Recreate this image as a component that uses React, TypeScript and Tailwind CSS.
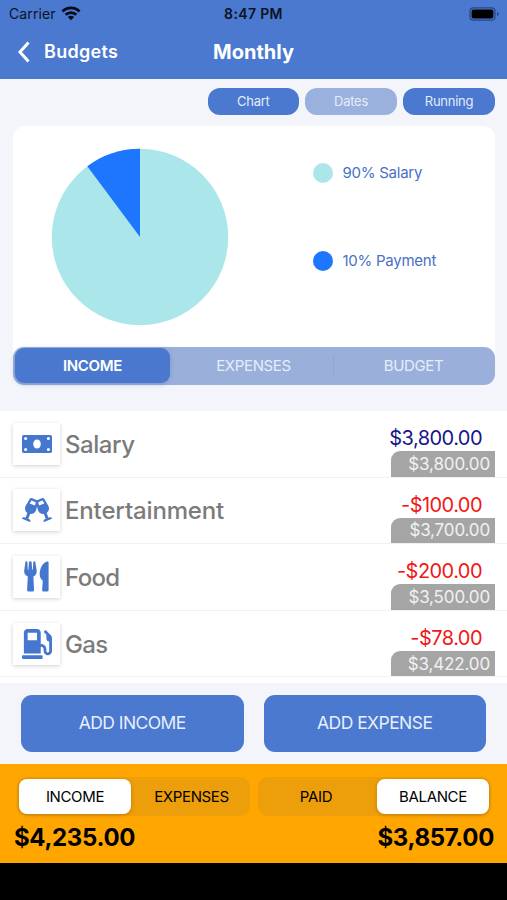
import React from "react";
import { FaGasPump, FaGlassCheers } from "react-icons/fa";

function Banknote() {
  return (
    <svg width="30" height="18" viewBox="0 0 30 18" fill="white">
      <rect width="30" height="18" rx="1.8" fill="#4677cf" />
      <ellipse cx="15" cy="9" rx="3.800" ry="4.500" />
      <circle cx="3.600" cy="3.600" r="1.500" />
      <circle cx="26.400" cy="3.600" r="1.500" />
      <circle cx="3.600" cy="14.400" r="1.500" />
      <circle cx="26.400" cy="14.400" r="1.500" />
    </svg>
  );
}

function Cutlery() {
  return (
    <svg width="25" height="31" viewBox="0 0 25 31" fill="#4677cf">
      <path d="M1.500.5Q2.600-.2 3.400.7L3.800 8.500Q4.100 9.200 4.400 8.500L5 .7Q6.400-.3 7.600.7L8.200 8.500Q8.500 9.200 8.800 8.500L9.300.7Q10.200-.2 11.200.5L12.700 9.600C12.900 12.600 11.700 14.400 9.400 15.500L10.100 29Q10.100 30.600 8.500 30.600H4.700Q3.100 30.600 3.100 29L3.800 15.500C1.100 14.400 0 12.600.2 9.600Z" />
      <path d="M24.600 1.600V29Q24.600 30.600 23 30.600H19.600Q18 30.600 18.100 29L18.800 19.700C16.300 17.700 15.600 15.600 15.700 12.500C15.900 6.500 19.400 1.200 23 .4Q24.600.2 24.600 1.600Z" />
    </svg>
  );
}

const rows = [
  { name: "Salary", amount: "$3,800.00", total: "$3,800.00", icon: <Banknote />, color: "text-[#16168c]", track: "tracking-[-0.45px]" },
  { name: "Entertainment", amount: "-$100.00", total: "$3,700.00", icon: <FaGlassCheers size={30} />, color: "text-[#f01818]", track: "tracking-[-0.15px]" },
  { name: "Food", amount: "-$200.00", total: "$3,500.00", icon: <Cutlery />, color: "text-[#f01818]", track: "tracking-[-0.65px]" },
  { name: "Gas", amount: "-$78.00", total: "$3,422.00", icon: <FaGasPump size={30} />, color: "text-[#f01818]", track: "tracking-[-0.6px]" },
];

function StatusBar() {
  return (
    <div className="grid h-[27px] grid-cols-3 items-center px-[7px] text-[14px] text-[#0b1324]">
      <div className="flex items-center gap-[5px] pl-[2px] tracking-[0.1px]">
        <span>Carrier</span>
        <svg width="20" height="15" viewBox="0 0 20 15" fill="none" stroke="#050b18" strokeWidth="2.9">
          <path d="M1.5 5.4a12 12 0 0 1 17 0" />
          <path d="M4.7 8.8a7.5 7.5 0 0 1 10.6 0" />
          <path d="M10 14.2 6.9 11.1a4.4 4.4 0 0 1 6.2 0Z" fill="#050b18" stroke="none" />
        </svg>
      </div>
      <span className="text-center font-semibold tracking-[0.35px]">8:47 PM</span>
      <div className="flex justify-end">
        <svg width="31" height="14" viewBox="0 0 31 14">
          <rect x="1" y="0.8" width="25" height="12.4" rx="3.5" fill="none" stroke="#284684" strokeWidth="1.2" />
          <rect x="2.6" y="2.4" width="21.8" height="9.2" rx="2" fill="#000" />
          <path d="M28 5v4c1-.3 1.7-1 1.7-2S29 5.300 28 5Z" fill="#284684" />
        </svg>
      </div>
    </div>
  );
}

function Pie() {
  return (
    <svg width="178" height="178" viewBox="-89 -89 178 178">
      <circle r="88.200" fill="#abe6eb" />
      <path d="M0 0V-88.200A88.200 88.200 0 0 0 -52.700 -70.700Z" fill="#1e76ff" />
    </svg>
  );
}

export default function App() {
  return (
    <div className="flex h-[900px] w-[507px] flex-col overflow-hidden bg-[#f3f5fa] font-['Inter','Liberation_Sans',sans-serif]">
      <header className="h-[79px] shrink-0 bg-[#4a79cf]">
        <StatusBar />
        <div className="grid h-[50px] grid-cols-3 items-center text-white">
          <div className="flex items-center gap-[14px] pl-[18px]">
            <svg width="12" height="22" viewBox="0 0 12 22" fill="none" stroke="white" strokeWidth="3">
              <path d="M10.500 1.500 2 11l8.500 9.500" />
            </svg>
            <span className="pb-[2px] text-[18px] font-semibold tracking-[0.3px]">Budgets</span>
          </div>
          <span className="text-center text-[20px] font-bold">Monthly</span>
        </div>
      </header>

      <div className="flex h-[47px] shrink-0 justify-end gap-[6px] pr-[12px] pt-[9px] text-[13px] tracking-[-0.25px] text-[#e4ebfa]">
        <div className="flex h-[27px] w-[91.500px] items-center justify-center rounded-[12px] bg-[#4a79cf]">Chart</div>
        <div className="flex h-[27px] w-[92px] items-center justify-center rounded-[12px] bg-[#9ab1de]">Dates</div>
        <div className="flex h-[27px] w-[92px] items-center justify-center rounded-[12px] bg-[#4a79cf]">Running</div>
      </div>

      <section className="mx-[13px] flex h-[259px] w-[482px] shrink-0 flex-col rounded-[12px] bg-white">
        <div className="flex h-[221px] pl-[38px] pt-[22px]">
          <Pie />
          <div className="ml-[83.500px] flex flex-col text-[15px] tracking-[-0.25px] text-[#4871c4]">
            <div className="flex h-[50px] items-center gap-[10px]">
              <span className="size-[20px] rounded-full bg-[#abe6eb]" />90% Salary
            </div>
            <div className="mt-[38px] flex h-[50px] items-center gap-[10px]">
              <span className="size-[20px] rounded-full bg-[#1e76ff]" />10% Payment
            </div>
          </div>
        </div>
        <div className="flex h-[38.500px] shrink-0 items-center rounded-[11px] bg-[#9ab0da] p-[2px] text-[15px] tracking-[-0.35px] text-[#e6edfa]">
          <div className="flex h-[35px] w-[155px] items-center justify-center rounded-[9px] bg-[#4a78ce] font-semibold text-white shadow-[0_1px_4px_#5878b880]">INCOME</div>
          <div className="flex w-[163px] items-center justify-center pl-[4px]">EXPENSES</div>
          <span className="h-[20px] w-px bg-[#90a7d4]" />
          <div className="flex flex-1 items-center justify-center">BUDGET</div>
        </div>
      </section>

      <section className="mt-[26px] h-[272px] shrink-0 bg-white">
        {rows.map(({ name, amount, total, icon, color, track }) => (
          <div key={name} className="flex h-[66.6px] justify-between border-b border-[#f0f1f2] pl-[13px] pr-[12px]">
            <div className="flex items-center gap-[5px]">
              <span className="flex h-[42px] w-[47px] items-center justify-center bg-white text-[#4677cf] shadow-[0_1px_4px_#0000002e]">{icon}</span>
              <span className={"pt-[2px] text-[24px] font-medium text-[#7b7b7b] " + track}>{name}</span>
            </div>
            <div className="flex w-[104px] flex-col items-end">
              <span className={"h-[40px] pr-[13px] pt-[14px] text-[20px] leading-[27px] tracking-[-0.55px] " + color}>{amount}</span>
              <span className="flex h-[25.600px] w-full items-center justify-end rounded-tl-[9px] bg-[#a5a5a5] pr-[5px] pt-[1.500px] text-[17px] tracking-[-0.15px] text-[#f1f1f1]">{total}</span>
            </div>
          </div>
        ))}
      </section>

      <div className="flex h-[81px] shrink-0 gap-[20px] px-[21px] pt-[12px] text-[17.500px] tracking-[-0.55px] text-[#e8effc]">
        <div className="flex h-[57px] flex-1 items-center justify-center rounded-[11px] bg-[#4a79cf]">ADD INCOME</div>
        <div className="flex h-[57px] flex-1 items-center justify-center rounded-[11px] bg-[#4a79cf]">ADD EXPENSE</div>
      </div>

      <footer className="h-[99px] shrink-0 bg-[#ffa600] text-black">
        <div className="flex gap-[8px] pl-[17px] pr-[16px] pt-[13px] text-[15px] tracking-[-0.35px]">
          <div className="flex h-[39px] w-[233px] items-center rounded-[10px] bg-[#ed9e0b] p-[2px]">
            <div className="flex h-[35px] w-[112px] items-center justify-center rounded-[8px] bg-white pt-px shadow-[0_1px_4px_#00000033]">INCOME</div>
            <div className="flex-1 pl-[4px] pt-px text-center">EXPENSES</div>
          </div>
          <div className="flex h-[39px] w-[233px] items-center rounded-[10px] bg-[#ed9e0b] p-[2px]">
            <div className="flex-1 pr-[5px] pt-px text-center">PAID</div>
            <div className="flex h-[35px] w-[112px] items-center justify-center rounded-[8px] bg-white pt-px shadow-[0_1px_4px_#00000033]">BALANCE</div>
          </div>
        </div>
        <div className="flex h-[42px] items-center justify-between pl-[14px] pr-[13px] pt-px text-[24px] font-bold tracking-[-0.35px]">
          <span>$4,235.00</span>
          <span>$3,857.00</span>
        </div>
      </footer>
      <div className="flex-1 bg-black" />
    </div>
  );
}
